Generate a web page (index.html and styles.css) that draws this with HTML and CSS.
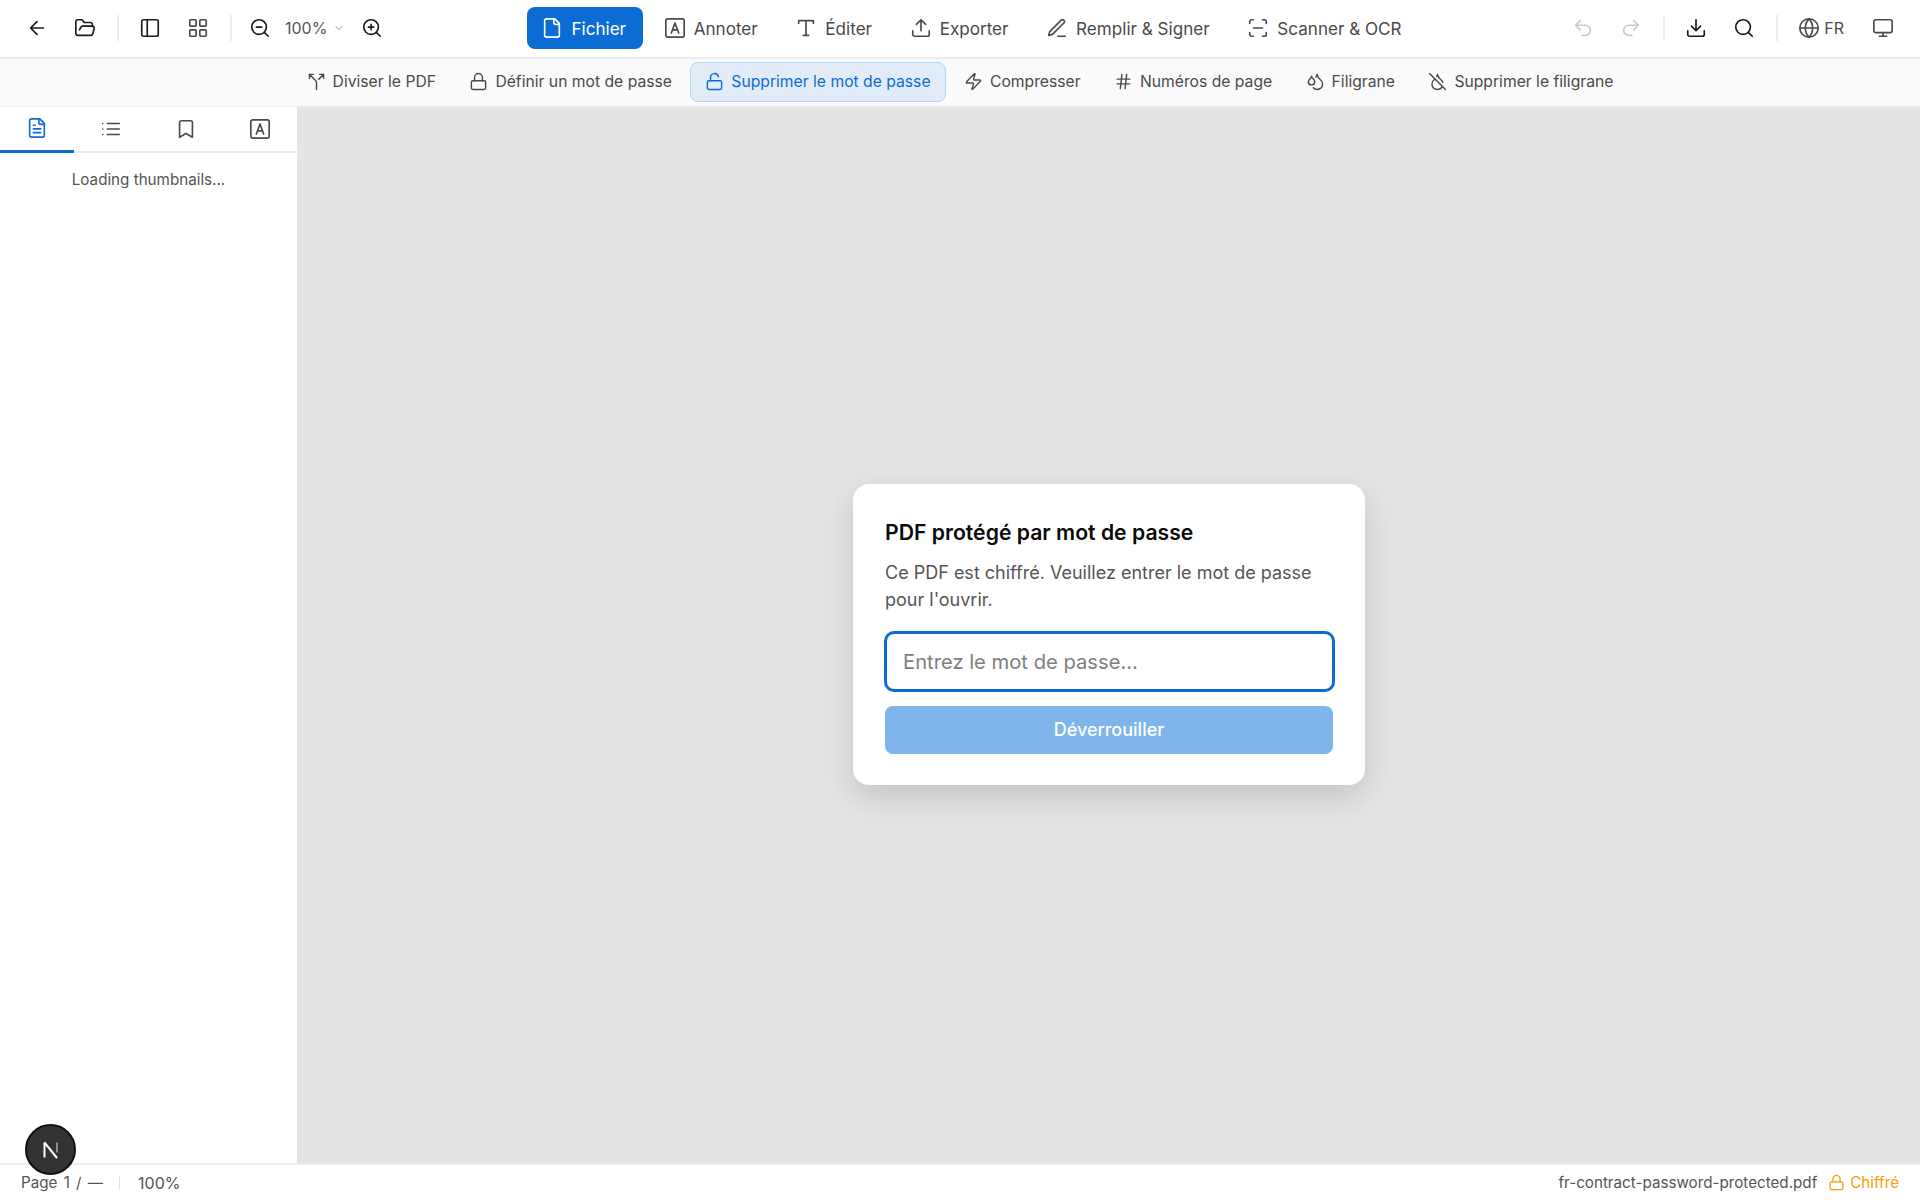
FILE: index.html
```html
<!DOCTYPE html>
<html lang="fr">
  <head>
    <title>fr-contract-password-protected.pdf</title>
    <meta charset="utf-8" />
    <link rel="stylesheet" href="styles.css">
  </head>

  <body>
    <svg class="sprite" xmlns="http://www.w3.org/2000/svg">
      <symbol id="i-back" viewBox="0 0 24 24"><path d="m12 19-7-7 7-7M19 12H5"/></symbol>
      <symbol id="i-folder" viewBox="0 0 24 24"><path d="m6 14 1.5-2.9A2 2 0 0 1 9.24 10H20a2 2 0 0 1 1.94 2.5l-1.54 6a2 2 0 0 1-1.95 1.5H4a2 2 0 0 1-2-2V5a2 2 0 0 1 2-2h3.9a2 2 0 0 1 1.69.9l.81 1.2a2 2 0 0 0 1.67.9H18a2 2 0 0 1 2 2v2"/></symbol>
      <symbol id="i-panel" viewBox="0 0 24 24"><rect x="3" y="3" width="18" height="18" rx="2"/><path d="M9 3v18"/></symbol>
      <symbol id="i-grid" viewBox="0 0 24 24"><rect x="3" y="3" width="7" height="7" rx="1"/><rect x="14" y="3" width="7" height="7" rx="1"/><rect x="14" y="14" width="7" height="7" rx="1"/><rect x="3" y="14" width="7" height="7" rx="1"/></symbol>
      <symbol id="i-zoom-out" viewBox="0 0 24 24"><circle cx="11" cy="11" r="8"/><path d="m21 21-4.3-4.3M8 11h6"/></symbol>
      <symbol id="i-zoom-in" viewBox="0 0 24 24"><circle cx="11" cy="11" r="8"/><path d="m21 21-4.3-4.3M8 11h6M11 8v6"/></symbol>
      <symbol id="i-chevron" viewBox="0 0 24 24"><path d="m6 9 6 6 6-6"/></symbol>
      <symbol id="i-file" viewBox="0 0 24 24"><path d="M15 2H6a2 2 0 0 0-2 2v16a2 2 0 0 0 2 2h12a2 2 0 0 0 2-2V7Z"/><path d="M14 2v4a2 2 0 0 0 2 2h4"/></symbol>
      <symbol id="i-file-text" viewBox="0 0 24 24"><path d="M15 2H6a2 2 0 0 0-2 2v16a2 2 0 0 0 2 2h12a2 2 0 0 0 2-2V7Z"/><path d="M14 2v4a2 2 0 0 0 2 2h4M10 9H8M16 13H8M16 17H8"/></symbol>
      <symbol id="i-annot" viewBox="0 0 24 24"><rect x="2" y="2" width="20" height="20" rx="2"/><path d="M8 17.500 12 6.500l4 11M9.400 14h5.200"/></symbol>
      <symbol id="i-type" viewBox="0 0 24 24"><path d="M4 7V4h16v3M9 20h6M12 4v16"/></symbol>
      <symbol id="i-upload" viewBox="0 0 24 24"><path d="M21 15v4a2 2 0 0 1-2 2H5a2 2 0 0 1-2-2v-4M17 8l-5-5-5 5M12 3v12"/></symbol>
      <symbol id="i-pen" viewBox="0 0 24 24"><path d="M13 21h8M16.500 3.500a2.120 2.120 0 0 1 3 3L7 19l-4 1 1-4Z"/></symbol>
      <symbol id="i-scan" viewBox="0 0 24 24"><path d="M3 7V5a2 2 0 0 1 2-2h2M17 3h2a2 2 0 0 1 2 2v2M21 17v2a2 2 0 0 1-2 2h-2M7 21H5a2 2 0 0 1-2-2v-2M7 12h10"/></symbol>
      <symbol id="i-undo" viewBox="0 0 24 24"><path d="M9 14 4 9l5-5M4 9h10.500a5.500 5.500 0 0 1 0 11H11"/></symbol>
      <symbol id="i-redo" viewBox="0 0 24 24"><path d="m15 14 5-5-5-5M20 9H9.500a5.500 5.500 0 0 0 0 11H13"/></symbol>
      <symbol id="i-download" viewBox="0 0 24 24"><path d="M21 15v4a2 2 0 0 1-2 2H5a2 2 0 0 1-2-2v-4M7 10l5 5 5-5M12 15V3"/></symbol>
      <symbol id="i-search" viewBox="0 0 24 24"><circle cx="11" cy="11" r="8"/><path d="m21 21-4.300-4.300"/></symbol>
      <symbol id="i-globe" viewBox="0 0 24 24"><circle cx="12" cy="12" r="10"/><path d="M12 2a14.500 14.500 0 0 0 0 20 14.500 14.500 0 0 0 0-20M2 12h20"/></symbol>
      <symbol id="i-monitor" viewBox="0 0 24 24"><rect x="2" y="3" width="20" height="14" rx="2"/><path d="M8 21h8M12 17v4"/></symbol>
      <symbol id="i-split" viewBox="0 0 24 24"><path d="M16 3h5v5M8 3H3v5M12 22v-8.300a4 4 0 0 0-1.172-2.872L3 3M15 9l6-6"/></symbol>
      <symbol id="i-lock" viewBox="0 0 24 24"><rect x="3" y="11" width="18" height="11" rx="2"/><path d="M7 11V7a5 5 0 0 1 10 0v4"/></symbol>
      <symbol id="i-unlock" viewBox="0 0 24 24"><rect x="3" y="11" width="18" height="11" rx="2"/><path d="M7 11V7a5 5 0 0 1 9.900-1"/></symbol>
      <symbol id="i-zap" viewBox="0 0 24 24"><path d="M4 14a1 1 0 0 1-.78-1.630l9.900-10.200a.5.5 0 0 1 .86.46l-1.920 6.020A1 1 0 0 0 13 10h7a1 1 0 0 1 .78 1.630l-9.900 10.200a.5.5 0 0 1-.86-.46l1.920-6.020A1 1 0 0 0 11 14z"/></symbol>
      <symbol id="i-hash" viewBox="0 0 24 24"><path d="M4 9h16M4 15h16M10 3 8 21M16 3l-2 18"/></symbol>
      <symbol id="i-drops" viewBox="0 0 24 24"><path d="M7 16.300c2.200 0 4-1.830 4-4.050 0-1.160-.57-2.260-1.710-3.190S7.290 6.750 7 5.300c-.29 1.450-1.140 2.840-2.290 3.760S3 11.100 3 12.250c0 2.220 1.800 4.050 4 4.050z"/><path d="M12.560 6.600A10.970 10.970 0 0 0 14 3.020c.5 2.500 2 4.900 4 6.500s3 3.500 3 5.500a6.980 6.980 0 0 1-11.910 4.970"/></symbol>
      <symbol id="i-drop-off" viewBox="0 0 24 24"><path d="M18.715 13.186C18.290 11.858 17.384 10.607 16 9.500c-2-1.600-3.500-4-4-6.500a10.700 10.700 0 0 1-.884 2.586M2 2l20 20M8.795 8.797A11 11 0 0 1 8 9.500C6 11.100 5 13 5 15a7 7 0 0 0 13.222 3.208"/></symbol>
      <symbol id="i-list" viewBox="0 0 24 24"><path d="M3 12h.01M3 18h.01M3 6h.01M8 12h13M8 18h13M8 6h13"/></symbol>
      <symbol id="i-bookmark" viewBox="0 0 24 24"><path d="m19 21-7-4-7 4V5a2 2 0 0 1 2-2h10a2 2 0 0 1 2 2v16z"/></symbol>
    </svg>

    <header class="topbar">
      <div class="toolgroup">
        <button class="iconbtn"><svg class="icon"><use href="#i-back"/></svg></button>
        <button class="iconbtn"><svg class="icon"><use href="#i-folder"/></svg></button>
        <span class="sep"></span>
        <button class="iconbtn"><svg class="icon"><use href="#i-panel"/></svg></button>
        <button class="iconbtn iconbtn--soft"><svg class="icon"><use href="#i-grid"/></svg></button>
        <span class="sep"></span>
        <button class="iconbtn iconbtn--out"><svg class="icon"><use href="#i-zoom-out"/></svg></button>
        <span class="zoomlevel">100%<svg class="icon icon--tiny"><use href="#i-chevron"/></svg></span>
        <button class="iconbtn"><svg class="icon"><use href="#i-zoom-in"/></svg></button>
      </div>

      <nav class="modes">
        <button class="mode mode--active"><svg class="icon"><use href="#i-file"/></svg>Fichier</button>
        <button class="mode"><svg class="icon"><use href="#i-annot"/></svg>Annoter</button>
        <button class="mode"><svg class="icon"><use href="#i-type"/></svg>Éditer</button>
        <button class="mode"><svg class="icon"><use href="#i-upload"/></svg>Exporter</button>
        <button class="mode"><svg class="icon"><use href="#i-pen"/></svg>Remplir &amp; Signer</button>
        <button class="mode"><svg class="icon"><use href="#i-scan"/></svg>Scanner &amp; OCR</button>
      </nav>

      <div class="toolgroup toolgroup--end">
        <button class="iconbtn iconbtn--off"><svg class="icon"><use href="#i-undo"/></svg></button>
        <button class="iconbtn iconbtn--off"><svg class="icon"><use href="#i-redo"/></svg></button>
        <span class="sep"></span>
        <button class="iconbtn"><svg class="icon"><use href="#i-download"/></svg></button>
        <button class="iconbtn"><svg class="icon"><use href="#i-search"/></svg></button>
        <span class="sep"></span>
        <button class="lang"><svg class="icon"><use href="#i-globe"/></svg>FR</button>
        <button class="iconbtn iconbtn--soft"><svg class="icon"><use href="#i-monitor"/></svg></button>
      </div>
    </header>

    <nav class="subbar">
      <button class="tool"><svg class="icon"><use href="#i-split"/></svg>Diviser le PDF</button>
      <button class="tool"><svg class="icon"><use href="#i-lock"/></svg>Définir un mot de passe</button>
      <button class="tool tool--active"><svg class="icon"><use href="#i-unlock"/></svg>Supprimer le mot de passe</button>
      <button class="tool"><svg class="icon"><use href="#i-zap"/></svg>Compresser</button>
      <button class="tool"><svg class="icon"><use href="#i-hash"/></svg>Numéros de page</button>
      <button class="tool"><svg class="icon"><use href="#i-drops"/></svg>Filigrane</button>
      <button class="tool"><svg class="icon"><use href="#i-drop-off"/></svg>Supprimer le filigrane</button>
    </nav>

    <main class="workspace">
      <aside class="sidebar">
        <div class="tabs">
          <button class="tab tab--active"><svg class="icon"><use href="#i-file-text"/></svg></button>
          <button class="tab"><svg class="icon"><use href="#i-list"/></svg></button>
          <button class="tab"><svg class="icon"><use href="#i-bookmark"/></svg></button>
          <button class="tab"><svg class="icon"><use href="#i-annot"/></svg></button>
        </div>
        <p class="loading">Loading thumbnails...</p>
      </aside>

      <section class="viewer">
        <form class="dialog">
          <h2 class="dialog__title">PDF protégé par mot de passe</h2>
          <p class="dialog__text">Ce PDF est chiffré. Veuillez entrer le mot de passe pour l'ouvrir.</p>
          <input class="dialog__input" type="password" placeholder="Entrez le mot de passe...">
          <button class="dialog__submit" type="button">Déverrouiller</button>
        </form>
      </section>
    </main>

    <footer class="statusbar">
      <span class="statusbar__page">Page 1 / —</span>
      <span class="statusbar__sep"></span>
      <span class="statusbar__zoom">100%</span>
      <span class="statusbar__file">fr-contract-password-protected.pdf</span>
      <span class="statusbar__lock"><svg class="icon"><use href="#i-lock"/></svg>Chiffré</span>
    </footer>

    <div class="devbadge">
      <svg class="devbadge__logo" viewBox="0 0 20 20">
        <path class="devbadge__stem" d="M3.500 2.500v15"/>
        <path class="devbadge__stem" d="M3.500 2.500 16 18"/>
        <path class="devbadge__fade" d="M16 2.500v10"/>
      </svg>
    </div>
  </body>
</html>
```

FILE: styles.css
```css
* {
  box-sizing: border-box;
}

html,
body {
  margin: 0;
  padding: 0;
  height: 100%;
}

body {
  display: flex;
  flex-direction: column;
  overflow: hidden;
  background: #fff;
  color: #4a4a4a;
  font-family: Inter, "Liberation Sans", sans-serif;
}

button {
  all: unset;
  box-sizing: border-box;
  cursor: pointer;
}

.sprite {
  display: none;
}

.icon {
  flex: none;
  width: 22px;
  height: 22px;
  fill: none;
  stroke: currentColor;
  stroke-width: 1.8;
  stroke-linecap: round;
  stroke-linejoin: round;
}

.icon--tiny {
  width: 12px;
  height: 12px;
  margin-left: 6px;
  color: #8a8a8a;
}

/* top bar */
.topbar {
  display: flex;
  align-items: center;
  flex: none;
  height: 59px;
  padding: 0 18px 1px 18px;
  border-bottom: 2px solid #ececec;
}

.toolgroup {
  display: flex;
  align-items: center;
}

.toolgroup--end {
  margin-left: auto;
}

.iconbtn {
  display: flex;
  align-items: center;
  justify-content: center;
  width: 38px;
  height: 38px;
  margin-right: 10px;
  color: #1a1a1a;
}

.iconbtn:last-child {
  margin-right: 0;
}

.iconbtn--soft {
  color: #4a4a4a;
}

.iconbtn--off {
  color: #c9c9c9;
}

.iconbtn--out {
  margin-left: -3px;
  margin-right: 0;
}

.sep {
  width: 2px;
  height: 26px;
  margin: 0 12px 0 3px;
  background: #ececec;
}

.zoomlevel {
  display: flex;
  align-items: center;
  margin: 0 8px 0 6px;
  font-size: 16px;
  color: #555;
}

.modes {
  display: flex;
  gap: 6.6px;
  margin-left: 136px;
}

.mode {
  display: flex;
  align-items: center;
  gap: 8px;
  height: 42px;
  padding: 0 17px 0 14px;
  border-radius: 8px;
  font-size: 17.1px;
  color: #4a4a4a;
}

.mode--active {
  background: #0b6dd3;
  color: #fff;
}

.lang {
  display: flex;
  align-items: center;
  gap: 4px;
  margin: 0 20px 0 8px;
  font-size: 16px;
  color: #4a4a4a;
}

/* second row of tools */
.subbar {
  display: flex;
  align-items: center;
  justify-content: center;
  gap: 3.4px;
  flex: none;
  height: 48px;
  padding-bottom: 2px;
  background: #fafafa;
  border-bottom: 1px solid #ececec;
}

.tool {
  display: flex;
  align-items: center;
  gap: 7px;
  height: 40px;
  padding: 0 14px;
  border: 1px solid transparent;
  border-radius: 8px;
  font-size: 15.7px;
  color: #4a4a4a;
}

.tool .icon {
  width: 19px;
  height: 19px;
}

.tool--active {
  background: #e1ecf8;
  border-color: #b6d3f0;
  color: #0b6dd3;
}

/* sidebar and canvas */
.workspace {
  display: flex;
  flex: 1;
  min-height: 0;
}

.sidebar {
  flex: none;
  width: 298px;
  background: #fff;
  border-right: 1px solid #e4e4e4;
}

.tabs {
  display: flex;
  height: 46px;
  border-bottom: 2px solid #ececec;
}

.tab {
  display: flex;
  align-items: center;
  justify-content: center;
  flex: 1;
  height: 46px;
  padding-bottom: 2px;
  color: #4a4a4a;
}

.tab--active {
  border-bottom: 3px solid #0b6dd3;
  color: #0b6dd3;
}

.loading {
  margin: 17px 0 0;
  font-size: 15.2px;
  line-height: 20px;
  text-align: center;
  color: #555;
}

.viewer {
  display: flex;
  align-items: center;
  justify-content: center;
  flex: 1;
  padding-bottom: 2px;
  background: #e4e4e4;
}

.dialog {
  width: 512px;
  padding: 33px 32px 31px;
  border-radius: 16px;
  background: #fff;
  box-shadow: 0 12px 32px rgba(0, 0, 0, 0.14);
}

.dialog__title {
  margin: 0 0 12px;
  font-size: 21.2px;
  line-height: 30px;
  font-weight: 600;
  color: #0a0a0a;
}

.dialog__text {
  margin: 0 0 18px;
  font-size: 18px;
  line-height: 27px;
  color: #555;
}

.dialog__input {
  display: block;
  width: 451px;
  height: 61px;
  margin-left: -1px;
  padding: 0 16px;
  border: 3px solid #0b6dd3;
  border-radius: 10px;
  outline: none;
  font: inherit;
  font-size: 20.2px;
}

.dialog__input::placeholder {
  color: #808080;
}

.dialog__submit {
  display: block;
  width: 448px;
  height: 48px;
  margin-top: 14px;
  border-radius: 8px;
  background: #7fb5ea;
  color: #fff;
  font-size: 18px;
  font-weight: 500;
  line-height: 48px;
  text-align: center;
}

/* status bar */
.statusbar {
  display: flex;
  align-items: center;
  flex: none;
  height: 37px;
  padding: 0 21px;
  border-top: 2px solid #ececec;
  font-size: 15.2px;
  color: #555;
}

.statusbar__page {
  word-spacing: 2px;
}

.statusbar__sep {
  width: 1px;
  height: 14px;
  margin: 0 18px 0 16px;
  background: #e4e4e4;
}

.statusbar__zoom {
  font-size: 16px;
}

.statusbar__file {
  margin-left: auto;
}

.statusbar__lock {
  display: flex;
  align-items: center;
  gap: 5px;
  margin-left: 11px;
  color: #f59f0a;
}

.statusbar__lock .icon {
  width: 17px;
  height: 17px;
}

/* dev tools badge, floats over the sidebar corner */
.devbadge {
  position: absolute;
  left: 25px;
  top: 1124px;
  display: flex;
  align-items: center;
  justify-content: center;
  width: 51px;
  height: 51px;
  border: 2px solid #111;
  border-radius: 50%;
  background: #333;
}

.devbadge__logo {
  width: 20px;
  height: 20px;
  fill: none;
  stroke-width: 2;
  stroke-linecap: butt;
}

.devbadge__stem {
  stroke: #fff;
}

.devbadge__fade {
  stroke: #8d8d8d;
}
```
